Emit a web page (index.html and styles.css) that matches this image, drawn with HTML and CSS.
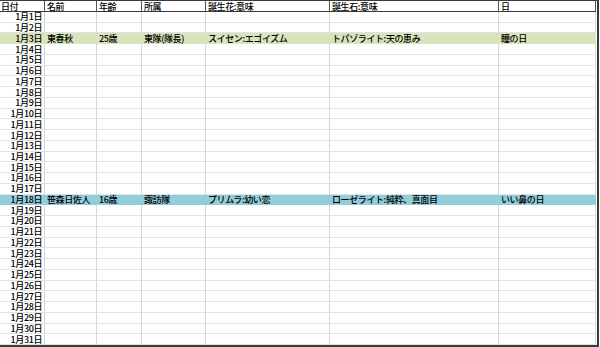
FILE: index.html
```html
<!DOCTYPE html>
<html lang="ja">
<head>
<meta charset="utf-8">
<link rel="stylesheet" href="styles.css">
</head>
<body>
<div class="sheet">
  <div class="row head"><div class="c">日付</div><div class="c">名前</div><div class="c">年齢</div><div class="c">所属</div><div class="c">誕生花:意味</div><div class="c">誕生石:意味</div><div class="c">日</div></div>
  <div class="row"><div class="c d">1月1日</div><div class="c"></div><div class="c"></div><div class="c"></div><div class="c"></div><div class="c"></div><div class="c"></div></div>
  <div class="row"><div class="c d">1月2日</div><div class="c"></div><div class="c"></div><div class="c"></div><div class="c"></div><div class="c"></div><div class="c"></div></div>
  <div class="row green"><div class="c d">1月3日</div><div class="c">東春秋</div><div class="c">25歳</div><div class="c">東隊(隊長)</div><div class="c">スイセン:エゴイズム</div><div class="c">トパゾライト:天の恵み</div><div class="c">瞳の日</div></div>
  <div class="row"><div class="c d">1月4日</div><div class="c"></div><div class="c"></div><div class="c"></div><div class="c"></div><div class="c"></div><div class="c"></div></div>
  <div class="row"><div class="c d">1月5日</div><div class="c"></div><div class="c"></div><div class="c"></div><div class="c"></div><div class="c"></div><div class="c"></div></div>
  <div class="row"><div class="c d">1月6日</div><div class="c"></div><div class="c"></div><div class="c"></div><div class="c"></div><div class="c"></div><div class="c"></div></div>
  <div class="row"><div class="c d">1月7日</div><div class="c"></div><div class="c"></div><div class="c"></div><div class="c"></div><div class="c"></div><div class="c"></div></div>
  <div class="row"><div class="c d">1月8日</div><div class="c"></div><div class="c"></div><div class="c"></div><div class="c"></div><div class="c"></div><div class="c"></div></div>
  <div class="row"><div class="c d">1月9日</div><div class="c"></div><div class="c"></div><div class="c"></div><div class="c"></div><div class="c"></div><div class="c"></div></div>
  <div class="row"><div class="c d">1月10日</div><div class="c"></div><div class="c"></div><div class="c"></div><div class="c"></div><div class="c"></div><div class="c"></div></div>
  <div class="row"><div class="c d">1月11日</div><div class="c"></div><div class="c"></div><div class="c"></div><div class="c"></div><div class="c"></div><div class="c"></div></div>
  <div class="row"><div class="c d">1月12日</div><div class="c"></div><div class="c"></div><div class="c"></div><div class="c"></div><div class="c"></div><div class="c"></div></div>
  <div class="row"><div class="c d">1月13日</div><div class="c"></div><div class="c"></div><div class="c"></div><div class="c"></div><div class="c"></div><div class="c"></div></div>
  <div class="row"><div class="c d">1月14日</div><div class="c"></div><div class="c"></div><div class="c"></div><div class="c"></div><div class="c"></div><div class="c"></div></div>
  <div class="row"><div class="c d">1月15日</div><div class="c"></div><div class="c"></div><div class="c"></div><div class="c"></div><div class="c"></div><div class="c"></div></div>
  <div class="row"><div class="c d">1月16日</div><div class="c"></div><div class="c"></div><div class="c"></div><div class="c"></div><div class="c"></div><div class="c"></div></div>
  <div class="row"><div class="c d">1月17日</div><div class="c"></div><div class="c"></div><div class="c"></div><div class="c"></div><div class="c"></div><div class="c"></div></div>
  <div class="row blue"><div class="c d">1月18日</div><div class="c">笹森日佐人</div><div class="c">16歳</div><div class="c">諏訪隊</div><div class="c">プリムラ:幼い恋</div><div class="c">ローゼライト:純粋、真面目</div><div class="c">いい鼻の日</div></div>
  <div class="row"><div class="c d">1月19日</div><div class="c"></div><div class="c"></div><div class="c"></div><div class="c"></div><div class="c"></div><div class="c"></div></div>
  <div class="row"><div class="c d">1月20日</div><div class="c"></div><div class="c"></div><div class="c"></div><div class="c"></div><div class="c"></div><div class="c"></div></div>
  <div class="row"><div class="c d">1月21日</div><div class="c"></div><div class="c"></div><div class="c"></div><div class="c"></div><div class="c"></div><div class="c"></div></div>
  <div class="row"><div class="c d">1月22日</div><div class="c"></div><div class="c"></div><div class="c"></div><div class="c"></div><div class="c"></div><div class="c"></div></div>
  <div class="row"><div class="c d">1月23日</div><div class="c"></div><div class="c"></div><div class="c"></div><div class="c"></div><div class="c"></div><div class="c"></div></div>
  <div class="row"><div class="c d">1月24日</div><div class="c"></div><div class="c"></div><div class="c"></div><div class="c"></div><div class="c"></div><div class="c"></div></div>
  <div class="row"><div class="c d">1月25日</div><div class="c"></div><div class="c"></div><div class="c"></div><div class="c"></div><div class="c"></div><div class="c"></div></div>
  <div class="row"><div class="c d">1月26日</div><div class="c"></div><div class="c"></div><div class="c"></div><div class="c"></div><div class="c"></div><div class="c"></div></div>
  <div class="row"><div class="c d">1月27日</div><div class="c"></div><div class="c"></div><div class="c"></div><div class="c"></div><div class="c"></div><div class="c"></div></div>
  <div class="row"><div class="c d">1月28日</div><div class="c"></div><div class="c"></div><div class="c"></div><div class="c"></div><div class="c"></div><div class="c"></div></div>
  <div class="row"><div class="c d">1月29日</div><div class="c"></div><div class="c"></div><div class="c"></div><div class="c"></div><div class="c"></div><div class="c"></div></div>
  <div class="row"><div class="c d">1月30日</div><div class="c"></div><div class="c"></div><div class="c"></div><div class="c"></div><div class="c"></div><div class="c"></div></div>
  <div class="row"><div class="c d">1月31日</div><div class="c"></div><div class="c"></div><div class="c"></div><div class="c"></div><div class="c"></div><div class="c"></div></div>
</div>
</body>
</html>
```
FILE: styles.css
```css
html, body {
  margin: 0;
  padding: 0;
  background: #ffffff;
}
body {
  width: 600px;
  height: 347px;
  overflow: hidden;
  font-family: "Noto Sans CJK JP", "Noto Sans", sans-serif;
  font-size: 9px;
  font-weight: 500;
  letter-spacing: -0.4px;
  color: #000;
}
.sheet {
  box-sizing: border-box;
  width: 599px;
  height: 347px;
  display: grid;
  grid-template-rows: 11px repeat(31, 1fr);
  border-top: 1px solid #3a3a3a;
  border-right: 2px solid #3a3a3a;
  border-bottom: 2px solid #3a3a3a;
}
.row {
  display: grid;
  grid-template-columns: 45px 52px 45px 64px 124px 169px 97px;
  min-height: 0;
}
.c {
  box-sizing: border-box;
  min-height: 0;
  border-right: 1px solid #d6d6d6;
  border-bottom: 1px solid #e2e2e2;
  padding: 0 2px;
  display: flex;
  align-items: center;
  white-space: nowrap;
  line-height: 9px;
}
.d {
  justify-content: flex-end;
  padding-right: 2px;
}
.head .c {
  border-right-color: #555;
  border-bottom: 1px solid #3a3a3a;
  padding-left: 1px;
}
.head .c + .c {
  padding-left: 2px;
}
.green .c {
  background: #d8e4bc;
  border-color: #d8e4bc;
}
.blue .c {
  background: #92cddc;
  border-color: #92cddc;
}
```
